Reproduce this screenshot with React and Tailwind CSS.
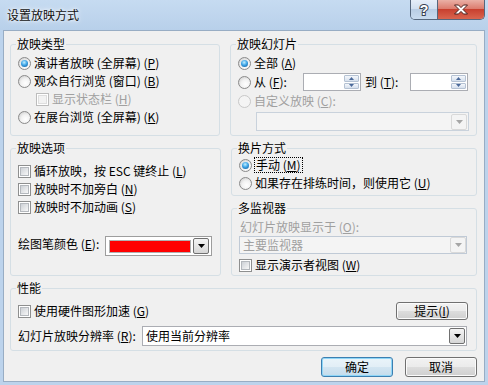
import React from "react";

const Acc = ({ k }) => (
  <span>
    (<span className="underline underline-offset-[1px]">{k}</span>)
  </span>
);

function Radio({ checked, disabled }) {
  return (
    <span
      className={`flex h-[13px] w-[13px] shrink-0 items-center justify-center rounded-full border ${
        disabled
          ? "border-[#c8c8c8] bg-[#f4f4f4]"
          : "border-[#8a8a8a] bg-[radial-gradient(circle_at_60%_65%,#ffffff_0%,#f2f2f2_45%,#c6c6c6_100%)]"
      }`}
    >
      {checked && (
        <span className="h-[7px] w-[7px] rounded-full bg-[radial-gradient(circle_at_45%_35%,#c4f0ff_0%,#3fa6e8_45%,#0b4f8e_100%)]" />
      )}
    </span>
  );
}

function Check({ disabled }) {
  return (
    <span
      className={`flex h-[13px] w-[13px] shrink-0 border bg-white p-[1px] ${
        disabled ? "border-[#bcbcbc]" : "border-[#8e8f8f]"
      }`}
    >
      <span
        className={`flex-1 border ${
          disabled
            ? "border-[#dedede] bg-[#f2f2f2]"
            : "border-[#b4b8bd] bg-gradient-to-br from-[#cdd1d6] to-[#f8f8f8]"
        }`}
      />
    </span>
  );
}

const Row = ({ children, className = "" }) => (
  <div className={`flex h-[18px] items-center ${className}`}>{children}</div>
);

function Group({ title, className = "", children }) {
  return (
    <fieldset className={`m-0 rounded-[3px] border border-[#d5dfe5] px-[7px] py-0 ${className}`}>
      <legend className="-ml-[2px] px-[1px] text-[12px] leading-[14px]">{title}</legend>
      {children}
    </fieldset>
  );
}

function SpinBtn({ up }) {
  return (
    <div className="flex flex-1 items-center justify-center rounded-[1px] border border-[#b5c2d3] bg-gradient-to-b from-[#f4f7fb] to-[#d6e0ed]">
      <svg width="5" height="3" viewBox="0 0 5 3">
        <path d={up ? "M0 3L2.5 0L5 3Z" : "M0 0H5L2.5 3Z"} fill="#4c6a9a" />
      </svg>
    </div>
  );
}

function Spin() {
  return (
    <div className="flex h-[18px] w-[58px] justify-end border border-[#abadb3] bg-white p-[1px]">
      <div className="flex w-[15px] flex-col gap-[1px]">
        <SpinBtn up />
        <SpinBtn />
      </div>
    </div>
  );
}

function DropBtn({ disabled }) {
  return (
    <div
      className={`flex h-[16px] w-[16px] items-center justify-center rounded-[2px] border ${
        disabled
          ? "border-[#d9d9d9] bg-[#f4f4f4]"
          : "border-[#707070] bg-gradient-to-b from-[#f4f4f4] to-[#d6d6d6]"
      }`}
    >
      <svg width="7" height="4" viewBox="0 0 7 4">
        <path d="M0 0H7L3.5 4Z" fill={disabled ? "#a6a6a6" : "#000"} />
      </svg>
    </div>
  );
}

function Btn({ children, def, className = "" }) {
  return (
    <div
      className={`flex w-[72px] items-center justify-center rounded-[3px] border text-[12px] ${
        def
          ? "border-[#3c7fb1] bg-[linear-gradient(#eaf4fa_0%,#e2eef6_49%,#d3e5f1_50%,#c4dcec_100%)] shadow-[inset_0_0_0_1px_#8fd6f7]"
          : "border-[#707070] bg-[linear-gradient(#f2f2f2_0%,#ebebeb_49%,#dddddd_50%,#cfcfcf_100%)] shadow-[inset_0_0_0_1px_#fbfbfb]"
      } ${className}`}
    >
      {children}
    </div>
  );
}

export default function App() {
  return (
    <div className="flex h-[385px] w-[488px] flex-col overflow-hidden bg-[#bcd3ec] font-['Noto_Sans_CJK_SC','Liberation_Sans',sans-serif] text-[12px] leading-[14px] text-black">
      {/* title bar */}
      <div className="flex h-[30px] shrink-0 items-start justify-between bg-gradient-to-b from-[#c6dbf1] to-[#b8d0ea] pl-[7px] pr-[3px]">
        <span className="pt-[7px] text-[12px] leading-[15px] text-[#111] [text-shadow:0_0_6px_#ffffff,0_0_3px_#ffffff]">
          设置放映方式
        </span>
        <div className="flex h-[20px] overflow-hidden rounded-b-[5px] border border-t-0 border-[#56677d]">
          <div className="flex w-[27px] items-center justify-center border-r border-[#56677d] bg-[linear-gradient(#e6eef8_0%,#d2e0f0_45%,#b9cde4_50%,#c9dbef_100%)]">
            <svg width="12" height="14" viewBox="0 0 12 14">
              <text x="6" y="12" textAnchor="middle" fontSize="14" fontWeight="bold" fontFamily="Liberation Sans, sans-serif" fill="#fff" stroke="#3a4252" strokeWidth="2" paintOrder="stroke">?</text>
            </svg>
          </div>
          <div className="flex w-[46px] items-center justify-center bg-[linear-gradient(#eab0a6_0%,#dc7d6f_45%,#c8402f_50%,#d9654f_100%)]">
            <svg width="16" height="11" viewBox="0 0 16 11">
              <path
                d="M1.5 1H5.5L8 3.6L10.5 1H14.5L10 5.5L14.5 10H10.5L8 7.4L5.5 10H1.5L6 5.5Z"
                fill="#fff"
                stroke="#4a1f1a"
                strokeWidth="1"
                strokeLinejoin="round"
              />
            </svg>
          </div>
        </div>
      </div>

      {/* client area */}
      <div className="mx-[3px] flex h-[352px] shrink-0 flex-col border border-[#98adc4] bg-[#f0f0f0] pl-[6px] pr-[7px] pt-[6px]">
        <div className="flex gap-[10px]">
          <Group title="放映类型" className="h-[99px] w-[211px]">
            <div className="flex flex-col pt-[3px]">
              <Row>
                <Radio checked />
                <span className="ml-[3px]">演讲者放映 (全屏幕) <Acc k="P" /></span>
              </Row>
              <Row>
                <Radio />
                <span className="ml-[3px]">观众自行浏览 (窗口) <Acc k="B" /></span>
              </Row>
              <Row className="ml-[18px]">
                <Check disabled />
                <span className="ml-[3px] text-[#a0a0a0]">显示状态栏 <Acc k="H" /></span>
              </Row>
              <Row>
                <Radio />
                <span className="ml-[3px]">在展台浏览 (全屏幕) <Acc k="K" /></span>
              </Row>
            </div>
          </Group>

          <Group title="放映幻灯片" className="h-[99px] w-[246px]">
            <div className="flex flex-col pt-[3px]">
              <Row>
                <Radio checked />
                <span className="ml-[3px]">全部 <Acc k="A" /></span>
              </Row>
              <div className="flex h-[20px] items-center">
                <Radio />
                <span className="ml-[3px] w-[49px]">从 <Acc k="F" />:</span>
                <Spin />
                <span className="ml-[4px] w-[45px]">到 <Acc k="T" />:</span>
                <Spin />
              </div>
              <Row>
                <Radio disabled />
                <span className="ml-[3px] text-[#a0a0a0]">自定义放映 <Acc k="C" />:</span>
              </Row>
              <div className="ml-[18px] mt-[2px] flex h-[19px] w-[213px] items-center justify-end border border-[#c9d2dc] bg-[#f4f4f4] pr-[1px]">
                <DropBtn disabled />
              </div>
            </div>
          </Group>
        </div>

        <div className="mt-[5px] flex gap-[10px]">
          <Group title="放映选项" className="h-[135px] w-[211px]">
            <div className="flex flex-col pt-[7px]">
              <Row>
                <Check />
                <span className="ml-[3px]">循环放映，按 ESC 键终止 <Acc k="L" /></span>
              </Row>
              <Row>
                <Check />
                <span className="ml-[3px]">放映时不加旁白 <Acc k="N" /></span>
              </Row>
              <Row>
                <Check />
                <span className="ml-[3px]">放映时不加动画 <Acc k="S" /></span>
              </Row>
              <div className="mt-[20px] flex h-[20px] items-center">
                <span className="w-[87px] pb-[4px]">绘图笔颜色 <Acc k="E" />:</span>
                <div className="flex h-[20px] w-[107px] items-center gap-[2px] border border-[#9d9d9d] bg-white pl-[3px] pr-[2px]">
                  <span className="h-[13px] flex-1 border border-[#b0b0b0] bg-[#ff0000]" />
                  <DropBtn />
                </div>
              </div>
            </div>
          </Group>

          <div className="flex w-[246px] flex-col">
            <Group title="换片方式" className="h-[55px]">
              <div className="flex flex-col pt-[1px]">
                <Row>
                  <Radio checked />
                  <span className="ml-[3px] px-[1px] outline-1 outline-dotted outline-[#000]">
                    手动 <Acc k="M" />
                  </span>
                </Row>
                <Row>
                  <Radio />
                  <span className="ml-[3px]">如果存在排练时间，则使用它 <Acc k="U" /></span>
                </Row>
              </div>
            </Group>
            <Group title="多监视器" className="mt-[5px] h-[75px]">
              <div className="flex flex-col pt-[3px]">
                <Row>
                  <span className="ml-[1px] text-[#a0a0a0]">幻灯片放映显示于 <Acc k="O" />:</span>
                </Row>
                <div className="flex h-[18px] w-[228px] items-center justify-between border border-[#c0cad6] bg-[#f4f4f4] pl-[3px]">
                  <span className="text-[#a0a0a0]">主要监视器</span>
                  <DropBtn disabled />
                </div>
                <Row className="mt-[2px]">
                  <Check />
                  <span className="ml-[3px]">显示演示者视图 <Acc k="W" /></span>
                </Row>
              </div>
            </Group>
          </div>
        </div>

        <Group title="性能" className="mt-[5px] h-[70px] w-[467px]">
          <div className="flex flex-col pt-[7px]">
            <div className="flex h-[18px] items-center justify-between">
              <div className="flex items-center">
                <Check />
                <span className="ml-[3px]">使用硬件图形加速 <Acc k="G" /></span>
              </div>
              <Btn className="mr-[1px] h-[18px]">
                提示 <Acc k="I" />
              </Btn>
            </div>
            <div className="mt-[6px] flex h-[20px] items-center">
              <span className="w-[124px]">幻灯片放映分辨率 <Acc k="R" />:</span>
              <div className="flex h-[20px] w-[325px] items-center justify-between border border-[#abadb3] bg-white pl-[3px] pr-[1px]">
                <span>使用当前分辨率</span>
                <DropBtn />
              </div>
            </div>
          </div>
        </Group>

        <div className="mt-[6px] flex justify-end gap-[12px]">
          <Btn def className="h-[20px]">确定</Btn>
          <Btn className="h-[20px]">取消</Btn>
        </div>
      </div>
    </div>
  );
}
